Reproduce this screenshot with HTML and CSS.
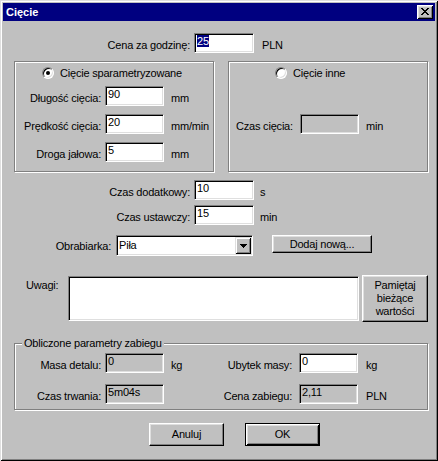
FILE: index.html
```html
<!DOCTYPE html>
<html>

<head>
    <meta charset="utf-8">
    <link rel="stylesheet" href="styles.css">
</head>

<body>
    <div class="window">
        <div class="titlebar">
            <span class="title">Cięcie</span>
            <span class="close">
                <svg width="8" height="7" viewBox="0 0 8 7" shape-rendering="crispEdges">
                    <path d="M0 0h2v1H0zM6 0h2v1H6zM1 1h2v1H1zM5 1h2v1H5zM2 2h4v1H2zM3 3h2v1H3zM2 4h4v1H2zM1 5h2v1H1zM5 5h2v1H5zM0 6h2v1H0zM6 6h2v1H6z" fill="#000" />
                </svg>
            </span>
        </div>

        <div class="content">
            <div class="row row-rate">
                <label class="lbl w-main">Cena za godzinę:</label>
                <div class="edit w60"><span class="sel">25</span></div>
                <span class="unit">PLN</span>
            </div>

            <div class="groups">
                <div class="group group-param">
                    <div class="option opt-left"><span class="radio checked"></span>Cięcie sparametryzowane</div>
                    <div class="row row-first">
                        <label class="lbl w-grp">Długość cięcia:</label>
                        <div class="edit">90</div>
                        <span class="unit u7">mm</span>
                    </div>
                    <div class="row row-next">
                        <label class="lbl w-grp">Prędkość cięcia:</label>
                        <div class="edit">20</div>
                        <span class="unit u7">mm/min</span>
                    </div>
                    <div class="row row-next">
                        <label class="lbl w-grp">Droga jałowa:</label>
                        <div class="edit">5</div>
                        <span class="unit u7">mm</span>
                    </div>
                </div>

                <div class="group group-other">
                    <div class="option opt-right"><span class="radio"></span>Cięcie inne</div>
                    <div class="row row-time">
                        <label class="lbl lbl-left">Czas cięcia:</label>
                        <div class="edit disabled"></div>
                        <span class="unit u7">min</span>
                    </div>
                </div>
            </div>

            <div class="row row-extra">
                <label class="lbl w-main">Czas dodatkowy:</label>
                <div class="edit w60">10</div>
                <span class="unit u6">s</span>
            </div>
            <div class="row row-setup">
                <label class="lbl w-main">Czas ustawczy:</label>
                <div class="edit w60">15</div>
                <span class="unit u6">min</span>
            </div>

            <div class="row row-machine">
                <label class="lbl w-machine">Obrabiarka:</label>
                <div class="combo">
                    <span class="combo-text">Piła</span>
                    <span class="combo-btn">
                        <svg width="7" height="4" viewBox="0 0 7 4" shape-rendering="crispEdges">
                            <path d="M0 0h7v1H0zM1 1h5v1H1zM2 2h3v1H2zM3 3h1v1H3z" fill="#000" />
                        </svg>
                    </span>
                </div>
                <button class="btn btn-add">Dodaj nową...</button>
            </div>

            <div class="row row-notes">
                <label class="lbl lbl-notes">Uwagi:</label>
                <div class="memo"></div>
                <button class="btn btn-remember">Pamiętaj<br>bieżące<br>wartości</button>
            </div>

            <div class="group group-result">
                <div class="legend">Obliczone parametry zabiegu</div>
                <div class="result-grid first">
                    <label class="lbl">Masa detalu:</label>
                    <div class="edit disabled">0</div>
                    <span class="unit u7">kg</span>
                    <label class="lbl lbl-r">Ubytek masy:</label>
                    <div class="edit">0</div>
                    <span class="unit u8">kg</span>
                </div>
                <div class="result-grid second">
                    <label class="lbl">Czas trwania:</label>
                    <div class="edit disabled">5m04s</div>
                    <span class="unit u7"></span>
                    <label class="lbl lbl-r">Cena zabiegu:</label>
                    <div class="edit disabled">2,11</div>
                    <span class="unit u8">PLN</span>
                </div>
            </div>

            <div class="actions">
                <button class="btn btn-dialog">Anuluj</button>
                <button class="btn btn-dialog btn-default">OK</button>
            </div>
        </div>
    </div>
</body>

</html>
```

FILE: styles.css
```css
body {
    margin: 0;
    background: #c0c0c0;
    font-family: 'Liberation Sans', Arial, sans-serif;
    font-size: 11px;
    letter-spacing: -0.2px;
    color: #000;
}

.window {
    width: 438px;
    height: 461px;
    padding: 3px;
    box-sizing: border-box;
    background: #c0c0c0;
    box-shadow: inset 1px 1px 0 #dfdfdf, inset -1px -1px 0 #000,
        inset 2px 2px 0 #fff, inset -2px -2px 0 #808080;
}

/* title bar */
.titlebar {
    height: 18px;
    background: #000080;
    color: #fff;
    display: flex;
    align-items: center;
    justify-content: space-between;
    padding-left: 3px;
}

.title {
    font-weight: bold;
    letter-spacing: 0;
}

.close {
    width: 16px;
    height: 14px;
    margin-right: 2px;
    box-sizing: border-box;
    background: #c0c0c0;
    display: flex;
    align-items: center;
    justify-content: center;
    padding: 0 1px 1px 0;
    box-shadow: inset 1px 1px 0 #fff, inset -1px -1px 0 #000,
        inset 2px 2px 0 #dfdfdf, inset -2px -2px 0 #808080;
}

.close svg {
    display: block;
}

/* rows */
.row {
    display: flex;
    align-items: center;
    height: 20px;
}

.lbl {
    box-sizing: border-box;
    text-align: right;
    padding-right: 4px;
    padding-top: 3px;
    white-space: nowrap;
}

.w-main {
    width: 191px;
}

.w-grp {
    width: 90px;
}

.w-machine {
    width: 113px;
    padding-right: 5px;
}

.unit {
    margin-left: 8px;
    padding-top: 3px;
}

.u6 {
    margin-left: 6px;
}

.u7 {
    margin-left: 7px;
}

.u8 {
    margin-left: 8px;
}

.edit {
    width: 59px;
    height: 20px;
    box-sizing: border-box;
    background: #fff;
    border: 1px solid;
    border-color: #808080 #fff #fff #808080;
    box-shadow: inset 1px 1px 0 #000, inset -1px -1px 0 #dfdfdf;
    padding: 1px 2px 0 2px;
    line-height: 13px;
    white-space: nowrap;
}

.edit.disabled {
    background: #c0c0c0;
}

.w60 {
    width: 60px;
}

.sel {
    background: #000080;
    color: #fff;
}

.row-rate {
    margin-top: 12px;
}

/* option groups */
.groups {
    display: flex;
    margin-top: 8px;
}

.group {
    box-sizing: border-box;
    border: 1px solid #808080;
    box-shadow: 1px 1px 0 #fff, inset 1px 1px 0 #fff;
}

.group-param,
.group-other {
    width: 200px;
    height: 111px;
    padding-top: 5px;
}

.group-param {
    margin-left: 11px;
}

.group-other {
    margin-left: 14px;
}

.option {
    display: flex;
    align-items: center;
    height: 12px;
    white-space: nowrap;
}

.opt-left {
    padding-left: 27px;
}

.opt-right {
    padding-left: 46px;
}

.radio {
    width: 12px;
    height: 12px;
    box-sizing: border-box;
    border-radius: 50%;
    background: #fff;
    border: 1px solid;
    border-color: #808080 #fff #fff #808080;
    box-shadow: inset 1px 1px 0 #000, inset -1px -1px 0 #dfdfdf;
    margin-right: 6px;
    display: flex;
    align-items: center;
    justify-content: center;
}

.radio.checked::after {
    content: '';
    width: 4px;
    height: 4px;
    border-radius: 50%;
    background: #000;
}

.row-first {
    margin-top: 7px;
}

.row-next {
    margin-top: 8px;
}

.row-time {
    margin-top: 35px;
}

.lbl-left {
    width: 71px;
    text-align: left;
    padding-left: 7px;
}

/* times and machine */
.row-extra {
    margin-top: 8px;
}

.row-setup {
    margin-top: 5px;
}

.row-machine {
    margin-top: 10px;
    height: 21px;
    align-items: flex-start;
}

.row-machine .lbl {
    padding-top: 5px;
}

.combo {
    width: 137px;
    height: 21px;
    box-sizing: border-box;
    background: #fff;
    border: 1px solid;
    border-color: #808080 #fff #fff #808080;
    box-shadow: inset 1px 1px 0 #000, inset -1px -1px 0 #dfdfdf;
    padding: 1px;
    display: flex;
}

.combo-text {
    flex: 1;
    padding: 2px 0 0 1px;
    line-height: 13px;
}

.combo-btn {
    width: 16px;
    height: 17px;
    box-sizing: border-box;
    background: #c0c0c0;
    display: flex;
    align-items: center;
    justify-content: center;
    box-shadow: inset 1px 1px 0 #dfdfdf, inset -1px -1px 0 #000,
        inset 2px 2px 0 #fff, inset -2px -2px 0 #808080;
}

.combo-btn svg {
    display: block;
}

.btn {
    margin: 0;
    padding: 0;
    box-sizing: border-box;
    font: inherit;
    letter-spacing: inherit;
    color: #000;
    background: #c0c0c0;
    border: 1px solid;
    border-color: #fff #000 #000 #fff;
    box-shadow: inset -1px -1px 0 #808080, inset 1px 1px 0 #dfdfdf;
    line-height: 13px;
}

.btn-add {
    width: 100px;
    height: 18px;
    margin-left: 19px;
}

/* notes */
.row-notes {
    margin-top: 19px;
    height: 47px;
    align-items: flex-start;
}

.lbl-notes {
    width: 65px;
    text-align: left;
    padding: 4px 0 0 23px;
}

.memo {
    width: 291px;
    height: 45px;
    margin-top: 1px;
    box-sizing: border-box;
    background: #fff;
    border: 1px solid;
    border-color: #808080 #fff #fff #808080;
    box-shadow: inset 1px 1px 0 #000, inset -1px -1px 0 #dfdfdf;
}

.btn-remember {
    width: 66px;
    height: 47px;
    margin-left: 3px;
}

/* results */
.group-result {
    margin: 21px 0 0 11px;
    width: 414px;
    height: 67px;
}

.legend {
    width: max-content;
    margin: -7px 0 0 7px;
    padding: 0 2px;
    background: #c0c0c0;
    line-height: 13px;
}

.result-grid {
    display: grid;
    grid-template-columns: 90px 59px 50px 85px 59px auto;
    align-items: center;
    height: 20px;
}

.result-grid.first {
    margin-top: 3px;
}

.result-grid.second {
    margin-top: 11px;
}

.lbl-r {
    padding-right: 7px;
}

/* dialog buttons */
.actions {
    display: flex;
    gap: 21px;
    margin: 13px 0 0 146px;
}

.btn-dialog {
    width: 75px;
    height: 23px;
}

.btn-default {
    border: 1px solid #000;
    box-shadow: inset 1px 1px 0 #fff, inset -1px -1px 0 #000,
        inset 2px 2px 0 #dfdfdf, inset -2px -2px 0 #808080;
}
```
